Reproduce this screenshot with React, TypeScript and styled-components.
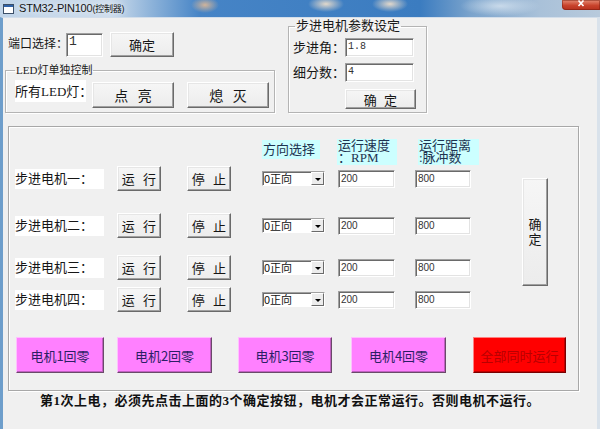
import styled, { createGlobalStyle } from "styled-components";

const UI_FONT = `"Liberation Serif", "Noto Sans CJK SC", serif`;
const SANS_FONT = `"Liberation Sans", "Noto Sans CJK SC", sans-serif`;
const CJK_FONT = `"Noto Sans CJK SC", sans-serif`;

const GlobalStyle = createGlobalStyle`
  html, body {
    margin: 0;
    padding: 0;
  }
  body {
    background: #f0f0f0;
    font-family: ${UI_FONT};
    color: #111;
  }
`;

const Window = styled.div`
  width: 600px;
  height: 429px;
  display: flex;
  flex-direction: column;
  overflow: hidden;
`;

const TitleBar = styled.div`
  height: 17px;
  flex: none;
  display: flex;
  align-items: flex-start;
  background:
    radial-gradient(ellipse 14px 8px at 205px 5px, rgba(255, 196, 140, 0.75), transparent),
    radial-gradient(ellipse 18px 8px at 326px 4px, rgba(255, 232, 205, 0.85), transparent),
    radial-gradient(ellipse 18px 8px at 390px 4px, rgba(255, 232, 205, 0.85), transparent),
    radial-gradient(ellipse 40px 10px at 500px 6px, rgba(215, 228, 240, 0.8), transparent),
    linear-gradient(
      90deg,
      #c0d4e8 0,
      #cddcec 110px,
      #8fb4da 150px,
      #4684c6 200px,
      #3b7cc0 420px,
      #7aa3cc 470px,
      #a9c1d9 540px,
      #b8cadc 600px
    );
`;

const AppIcon = styled.svg`
  flex: none;
  margin: 4px 0 0 3px;
`;

const Title = styled.span`
  margin-left: 5px;
  padding-top: 2px;
  font: 11px/13px ${SANS_FONT};
  letter-spacing: -0.2px;
  color: #151515;
  text-shadow: 0 0 6px rgba(255, 255, 255, 0.95);
  white-space: nowrap;

  small {
    font-size: 9px;
  }
`;

const CloseButton = styled.div`
  margin-left: auto;
  width: 38px;
  height: 10px;
  display: flex;
  justify-content: center;
  border-radius: 0 0 0 4px;
  background: linear-gradient(#e58a72, #c8432c 55%, #b5301d);
  box-shadow: inset 0 0 0 1px rgba(110, 25, 10, 0.45);
`;

const Frame = styled.div`
  flex: 1;
  display: flex;
  flex-direction: column;
  background: #f0f0f0;
  border-left: 3px solid #6e9ecb;
  border-right: 3px solid #d9e2eb;
  border-top: 1px solid #d3deea;
`;

/* ---------- top half: port, LED and motor parameter groups ---------- */

const TopArea = styled.div`
  display: flex;
  align-items: flex-start;
`;

const LeftColumn = styled.div`
  margin-left: 2px;
  width: 270px;
  display: flex;
  flex-direction: column;
`;

const PortRow = styled.div`
  margin-top: 14px;
  padding-left: 3px;
  height: 25px;
  display: flex;
  align-items: center;
`;

const GroupBox = styled.fieldset<{ $w: number; $pad: string }>`
  margin: 0;
  min-width: 0;
  width: ${(p) => p.$w}px;
  box-sizing: border-box;
  padding: ${(p) => p.$pad};
  border: 1px solid #b4b4b4;
  box-shadow: inset 1px 1px 0 #fff, 1px 1px 0 #fff;
`;

const Caption = styled.legend<{ $size: number }>`
  padding: 0 1px;
  margin-left: ${(p) => (p.$size > 12 ? 2 : 0)}px;
  font-size: ${(p) => p.$size}px;
  line-height: ${(p) => p.$size + 1}px;
  color: #1b1b1b;
`;

const LedGroup = styled(GroupBox)`
  margin-top: 7px;
`;

const ParamGroup = styled(GroupBox)`
  margin: 1px 0 0 13px;
`;

const Row = styled.div<{ $mt?: number; $h: number; $top?: boolean }>`
  display: flex;
  align-items: ${(p) => (p.$top ? "flex-start" : "center")};
  height: ${(p) => p.$h}px;
  margin-top: ${(p) => p.$mt ?? 0}px;
`;

const Label = styled.span<{ $w: number; $h?: number; $size?: number; $white?: boolean }>`
  flex: none;
  display: flex;
  align-items: center;
  width: ${(p) => p.$w}px;
  height: ${(p) => (p.$h ? `${p.$h}px` : "auto")};
  font-size: ${(p) => p.$size ?? 13}px;
  line-height: 15px;
  white-space: nowrap;
  background: ${(p) => (p.$white ? "#fff" : "transparent")};
  color: #161616;
`;

const Button = styled.button<{ $w: number; $h: number; $ml?: number; $mt?: number; $size?: number; $gap?: number }>`
  flex: none;
  width: ${(p) => p.$w}px;
  height: ${(p) => p.$h}px;
  margin: ${(p) => p.$mt ?? 0}px 0 0 ${(p) => p.$ml ?? 0}px;
  padding: 0;
  box-sizing: border-box;
  background: linear-gradient(#f6f6f6, #ececec);
  border: 1px solid;
  border-color: #ffffff #6a6a6a #6a6a6a #ffffff;
  box-shadow: inset -1px -1px 0 #a0a0a0, inset 1px 1px 0 #e6e6e6;
  font-family: ${UI_FONT};
  font-size: ${(p) => p.$size ?? 13}px;
  word-spacing: ${(p) => p.$gap ?? 0}px;
  color: #151515;
  white-space: pre;
`;

const TextBox = styled.div<{ $w: number; $h: number; $ml?: number; $mono?: boolean; $size?: number }>`
  flex: none;
  width: ${(p) => p.$w}px;
  height: ${(p) => p.$h}px;
  margin-left: ${(p) => p.$ml ?? 0}px;
  box-sizing: border-box;
  padding: 2px 0 0 2px;
  background: #fff;
  border: 1px solid;
  border-color: #a0a0a0 #ffffff #ffffff #a0a0a0;
  box-shadow: inset 1px 1px 0 #6a6a6a, inset -1px -1px 0 #e3e3e3;
  font-family: ${(p) => (p.$mono ? `"Liberation Mono", monospace` : SANS_FONT)};
  font-size: ${(p) => p.$size ?? 10}px;
  line-height: 11px;
  color: #333;
`;

/* ---------- motor panel ---------- */

const Panel = styled.div`
  margin: 13px 0 0 5px;
  width: 571px;
  height: 265px;
  box-sizing: border-box;
  padding: 12px 0 0 6px;
  border: 1px solid #a8a8a8;
  box-shadow: inset 1px 1px 0 #fff, 1px 1px 0 #fff;
  display: flex;
  flex-direction: column;
`;

const PanelBody = styled.div`
  display: flex;
  align-items: flex-start;
`;

const MotorColumn = styled.div`
  display: flex;
  flex-direction: column;
`;

const Cell = styled.div<{ $w: number }>`
  flex: none;
  width: ${(p) => p.$w}px;
  display: flex;
  align-items: center;
`;

const HeaderTag = styled.div<{ $w: number; $h: number; $ml?: number; $mt?: number; $lh: number }>`
  flex: none;
  align-self: flex-start;
  width: ${(p) => p.$w}px;
  height: ${(p) => p.$h}px;
  margin: ${(p) => p.$mt ?? 0}px 0 0 ${(p) => p.$ml ?? 0}px;
  box-sizing: border-box;
  padding: 1px 0 0 1px;
  background: #ccffff;
  color: #1d3350;
  font-size: 13px;
  line-height: ${(p) => p.$lh}px;
  white-space: pre;
`;

const Combo = styled.div`
  width: 63px;
  height: 15px;
  box-sizing: border-box;
  display: flex;
  background: #fff;
  border: 1px solid;
  border-color: #a0a0a0 #ffffff #ffffff #a0a0a0;
  box-shadow: inset 1px 1px 0 #6a6a6a;
  font: 11px/12px ${CJK_FONT};
  color: #111;
`;

const ComboText = styled.span`
  flex: 1;
  padding-left: 1px;
  line-height: 13px;
`;

const ComboArrow = styled.span`
  width: 13px;
  height: 13px;
  box-sizing: border-box;
  display: flex;
  align-items: center;
  justify-content: center;
  background: #ececec;
  border: 1px solid;
  border-color: #ffffff #6a6a6a #6a6a6a #ffffff;

  &::after {
    content: "";
    border-left: 3px solid transparent;
    border-right: 3px solid transparent;
    border-top: 3px solid #000;
    margin-top: 1px;
  }
`;

const VerticalButton = styled(Button)`
  margin: 39px 0 0 51px;
  line-height: 15px;
  white-space: normal;
  display: flex;
  flex-direction: column;
  align-items: center;
  justify-content: center;
`;

const HomeRow = styled.div`
  margin-top: 25px;
  display: flex;
  height: 36px;
`;

const HomeButton = styled(Button)<{ $alarm?: boolean }>`
  height: 36px;
  background: ${(p) => (p.$alarm ? "#ff0000" : "#ff80ff")};
  border-color: ${(p) => (p.$alarm ? "#ff8080 #7a0000 #7a0000 #ff8080" : "#ffc0ff #6a4a6a #6a4a6a #ffc0ff")};
  box-shadow: inset -1px -1px 0 ${(p) => (p.$alarm ? "#c00000" : "#c060c0")};
  color: ${(p) => (p.$alarm ? "#b80000" : "#2c1f66")};
  font-family: ${CJK_FONT};
  font-size: 13px;
`;

const Note = styled.p`
  margin: 2px 0 0 37px;
  font-family: ${UI_FONT};
  font-size: 13px;
  font-weight: 700;
  line-height: 15px;
  letter-spacing: 0.5px;
  color: #111;
  white-space: nowrap;
`;

const motors = [
  { name: "步进电机一：", mt: 1 },
  { name: "步进电机二：", mt: 22 },
  { name: "步进电机三：", mt: 17 },
  { name: "步进电机四：", mt: 7 },
];

const homeButtons = [
  { text: "电机1回零", w: 88, ml: 1 },
  { text: "电机2回零", w: 95, ml: 13 },
  { text: "电机3回零", w: 94, ml: 26 },
  { text: "电机4回零", w: 95, ml: 19 },
  { text: "全部同时运行", w: 93, ml: 27, alarm: true },
];

const App = () => {
  return (
    <>
      <GlobalStyle />
      <Window>
        <TitleBar>
          <AppIcon width="11" height="10" viewBox="0 0 11 10">
            <rect x="0.5" y="0.5" width="10" height="9" fill="#fff" stroke="#3b4f68" />
            <rect x="1" y="1" width="9" height="2" fill="#2f62a8" />
          </AppIcon>
          <Title>
            STM32-PIN100<small>(控制器)</small>
          </Title>
          <CloseButton>
            <svg width="8" height="7" viewBox="0 0 8 7">
              <path d="M1.5 0.5 L6.5 6 M6.5 0.5 L1.5 6" stroke="#fff" strokeWidth="1.6" />
            </svg>
          </CloseButton>
        </TitleBar>

        <Frame>
          <TopArea>
            <LeftColumn>
              <PortRow>
                <Label $w={58} $size={12}>端口选择：</Label>
                <TextBox $w={37} $h={24} $size={13} $mono>
                  1
                </TextBox>
                <Button $w={64} $h={25} $ml={7}>确定</Button>
              </PortRow>

              <LedGroup $w={270} $pad="4px 4px 4px 9px">
                <Caption $size={11}>LED灯单独控制</Caption>
                <Row $h={28} $top>
                  <Label $w={71} $h={22} $white>所有LED灯：</Label>
                  <Button $w={82} $h={26} $ml={6} $mt={2} $size={14} $gap={6}>
                    点 亮
                  </Button>
                  <Button $w={82} $h={26} $ml={13} $mt={2} $size={14} $gap={6}>
                    熄 灭
                  </Button>
                </Row>
              </LedGroup>
            </LeftColumn>

            <ParamGroup $w={139} $pad="5px 4px 3px 4px">
              <Caption $size={13}>步进电机参数设定</Caption>
              <Row $h={19}>
                <Label $w={52}>步进角：</Label>
                <TextBox $w={69} $h={19} $mono>1.8</TextBox>
              </Row>
              <Row $h={19} $mt={6}>
                <Label $w={52}>细分数：</Label>
                <TextBox $w={69} $h={19} $mono>4</TextBox>
              </Row>
              <Row $h={20} $mt={7}>
                <Button $w={71} $h={20} $ml={52} $gap={4}>
                  确 定
                </Button>
              </Row>
            </ParamGroup>
          </TopArea>

          <Panel>
            <PanelBody>
              <MotorColumn>
                <Row $h={26} $top>
                  <Cell $w={102} />
                  <Cell $w={70} />
                  <Cell $w={75} />
                  <Cell $w={76}>
                    <HeaderTag $w={58} $h={19} $mt={1} $lh={17}>
                      方向选择
                    </HeaderTag>
                  </Cell>
                  <Cell $w={77}>
                    <HeaderTag $w={60} $h={26} $ml={-1} $lh={12}>
                      {"运行速度\n：RPM"}
                    </HeaderTag>
                  </Cell>
                  <Cell $w={56}>
                    <HeaderTag $w={61} $h={26} $ml={3} $lh={12}>
                      {"运行距离\n:脉冲数"}
                    </HeaderTag>
                  </Cell>
                </Row>

                {motors.map((m) => (
                  <Row key={m.name} $h={25} $mt={m.mt}>
                    <Cell $w={102}>
                      <Label $w={89} $h={20} $white>
                        {m.name}
                      </Label>
                    </Cell>
                    <Cell $w={70}>
                      <Button $w={44} $h={25} $gap={5}>运 行</Button>
                    </Cell>
                    <Cell $w={75}>
                      <Button $w={44} $h={25} $gap={5}>停 止</Button>
                    </Cell>
                    <Cell $w={76}>
                      <Combo>
                        <ComboText>0正向</ComboText>
                        <ComboArrow />
                      </Combo>
                    </Cell>
                    <Cell $w={77}>
                      <TextBox $w={57} $h={18}>200</TextBox>
                    </Cell>
                    <Cell $w={56}>
                      <TextBox $w={56} $h={18}>800</TextBox>
                    </Cell>
                  </Row>
                ))}
              </MotorColumn>

              <VerticalButton $w={26} $h={108}>
                <span>确</span>
                <span>定</span>
              </VerticalButton>
            </PanelBody>

            <HomeRow>
              {homeButtons.map((b) => (
                <HomeButton key={b.text} $w={b.w} $h={36} $ml={b.ml} $alarm={b.alarm}>
                  {b.text}
                </HomeButton>
              ))}
            </HomeRow>
          </Panel>

          <Note>第1次上电，必须先点击上面的3个确定按钮，电机才会正常运行。否则电机不运行。</Note>
        </Frame>
      </Window>
    </>
  );
};

export default App;
